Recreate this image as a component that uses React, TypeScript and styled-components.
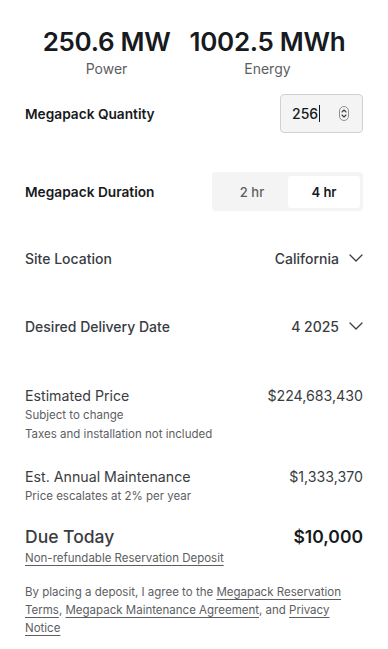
import styled, { createGlobalStyle } from 'styled-components'

const GlobalStyle = createGlobalStyle`
  * { box-sizing: border-box; }
  body {
    margin: 0;
    background: #ffffff;
    font-family: Inter, "Noto Sans", "Liberation Sans", sans-serif;
    color: #171a20;
    -webkit-font-smoothing: antialiased;
  }
`

const Page = styled.div`
  width: 388px;
  padding: 0 25px 20px;
`

const Stats = styled.div`
  display: flex;
  justify-content: center;
  gap: 19px;
  padding-top: 25px;
`

const Stat = styled.div`
  display: flex;
  flex-direction: column;
  align-items: center;
`

const StatValue = styled.div`
  font-size: 26px;
  line-height: 33px;
  font-weight: 600;
  letter-spacing: -0.3px;
  color: #171a20;
`

const StatLabel = styled.div`
  font-size: 14px;
  line-height: 21px;
  color: #5c5e62;
`

const Row = styled.div<{ $mt: number; $h?: number }>`
  display: flex;
  align-items: center;
  justify-content: space-between;
  margin-top: ${(p) => p.$mt}px;
  height: ${(p) => p.$h ?? 40}px;
`

const Label = styled.div<{ $strong?: boolean }>`
  font-size: ${(p) => (p.$strong ? 13.7 : 14)}px;
  font-weight: ${(p) => (p.$strong ? 600 : 500)};
  color: ${(p) => (p.$strong ? '#171a20' : '#393c41')};
`

const NumberBox = styled.div`
  width: 83px;
  height: 39px;
  display: flex;
  align-items: center;
  justify-content: space-between;
  padding: 0 13px 0 11px;
  background: #f4f4f4;
  border: 1px solid #d0d1d2;
  border-radius: 4px;
  font-size: 14px;
  font-weight: 500;
  color: #171a20;
`

const Caret = styled.span`
  display: inline-block;
  width: 1px;
  height: 17px;
  margin-left: 1px;
  vertical-align: -3px;
  background: #171a20;
`

const Toggle = styled.div`
  width: 151px;
  height: 39px;
  display: grid;
  grid-template-columns: 1fr 1fr;
  padding: 4px 3px 3px 4px;
  background: #f4f4f4;
  border-radius: 4px;
`

const ToggleOption = styled.div<{ $active?: boolean }>`
  display: flex;
  align-items: center;
  justify-content: center;
  font-size: 13px;
  font-weight: ${(p) => (p.$active ? 600 : 500)};
  color: ${(p) => (p.$active ? '#171a20' : '#5c5e62')};
  background: ${(p) => (p.$active ? '#ffffff' : 'transparent')};
  border-radius: 3px;
`

const Select = styled.div`
  display: flex;
  align-items: center;
  gap: 10px;
  font-size: 14px;
  font-weight: 500;
  color: #393c41;
`

const Summary = styled.div<{ $mt: number }>`
  display: flex;
  flex-direction: column;
  margin-top: ${(p) => p.$mt}px;
`

const SummaryHead = styled.div<{ $big?: boolean }>`
  display: flex;
  justify-content: space-between;
  align-items: center;
  font-size: ${(p) => (p.$big ? 17.5 : 14.2)}px;
  line-height: ${(p) => (p.$big ? 24 : 20)}px;
  font-weight: ${(p) => (p.$big ? 500 : 400)};
  color: #393c41;
`

const Amount = styled.span<{ $big?: boolean }>`
  font-weight: ${(p) => (p.$big ? 600 : 400)};
  color: ${(p) => (p.$big ? '#171a20' : '#393c41')};
`

const Note = styled.div`
  font-size: 11.5px;
  line-height: 19px;
  color: #5c5e62;
`

const Link = styled.a`
  color: inherit;
  text-decoration: underline;
  text-underline-offset: 3px;
  text-decoration-color: #5c5e62;
`

const Disclaimer = styled.p`
  margin: 15px 0 0;
  font-size: 11.5px;
  line-height: 18px;
  color: #5c5e62;
`

function Spinner() {
  return (
    <svg width="10" height="15" viewBox="0 0 10 15" fill="none">
      <rect x="0.5" y="0.5" width="9" height="14" rx="4.5" stroke="#8e8e8e" strokeWidth="1" />
      <path d="M3 6 L5 4 L7 6" stroke="#393c41" strokeWidth="1.1" strokeLinecap="round" strokeLinejoin="round" />
      <path d="M3 9 L5 11 L7 9" stroke="#393c41" strokeWidth="1.1" strokeLinecap="round" strokeLinejoin="round" />
    </svg>
  )
}

function Chevron() {
  return (
    <svg width="14" height="8" viewBox="0 0 14 8" fill="none">
      <path d="M1 1 L7 7 L13 1" stroke="#393c41" strokeWidth="1.3" strokeLinecap="round" strokeLinejoin="round" />
    </svg>
  )
}

export default function App() {
  return (
    <>
      <GlobalStyle />
      <Page>
        <Stats>
          <Stat>
            <StatValue>250.6 MW</StatValue>
            <StatLabel>Power</StatLabel>
          </Stat>
          <Stat>
            <StatValue>1002.5 MWh</StatValue>
            <StatLabel>Energy</StatLabel>
          </Stat>
        </Stats>

        <Row $mt={15} $h={39}>
          <Label $strong>Megapack Quantity</Label>
          <NumberBox>
            <span>
              256
              <Caret />
            </span>
            <Spinner />
          </NumberBox>
        </Row>

        <Row $mt={39} $h={39}>
          <Label $strong>Megapack Duration</Label>
          <Toggle>
            <ToggleOption>2 hr</ToggleOption>
            <ToggleOption $active>4 hr</ToggleOption>
          </Toggle>
        </Row>

        <Row $mt={27}>
          <Label>Site Location</Label>
          <Select>
            California
            <Chevron />
          </Select>
        </Row>

        <Row $mt={28}>
          <Label>Desired Delivery Date</Label>
          <Select>
            4 2025
            <Chevron />
          </Select>
        </Row>

        <Summary $mt={40}>
          <SummaryHead>
            <span>Estimated Price</span>
            <Amount>$224,683,430</Amount>
          </SummaryHead>
          <Note>Subject to change</Note>
          <Note>Taxes and installation not included</Note>
        </Summary>

        <Summary $mt={23}>
          <SummaryHead>
            <span>Est. Annual Maintenance</span>
            <Amount>$1,333,370</Amount>
          </SummaryHead>
          <Note>Price escalates at 2% per year</Note>
        </Summary>

        <Summary $mt={19}>
          <SummaryHead $big>
            <span>Due Today</span>
            <Amount $big>$10,000</Amount>
          </SummaryHead>
          <Note>
            <Link>Non-refundable Reservation Deposit</Link>
          </Note>
        </Summary>

        <Disclaimer>
          By placing a deposit, I agree to the <Link>Megapack Reservation Terms</Link>,{' '}
          <Link>Megapack Maintenance Agreement</Link>, and <Link>Privacy Notice</Link>
        </Disclaimer>
      </Page>
    </>
  )
}
